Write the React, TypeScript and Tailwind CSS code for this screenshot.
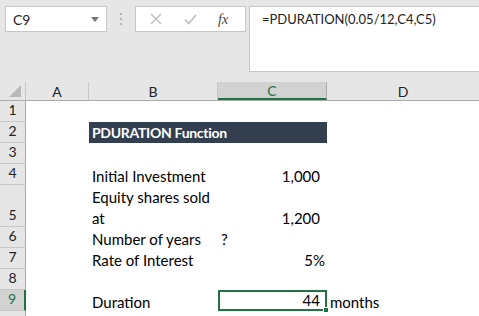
const cellFont = { fontFamily: "Lato, 'Open Sans', sans-serif" };

const rows = [
  { n: "1", h: 21 },
  { n: "2", h: 21 },
  { n: "3", h: 21 },
  { n: "4", h: 21 },
  { n: "5", h: 42 },
  { n: "6", h: 21 },
  { n: "7", h: 21 },
  { n: "8", h: 21 },
  { n: "9", h: 21 },
  { n: "", h: 21 },
];

function RowHeader({ n, h, active }: { n: string; h: number; active?: boolean }) {
  return (
    <div
      className={
        active
          ? "flex items-end justify-center border-b border-r-2 border-b-[#c6c6c6] border-r-[#217346] bg-[#d2d2d2] pb-[1px] text-[14px] text-[#217346]"
          : "flex items-end justify-center border-b border-r border-b-[#c6c6c6] border-r-[#ababab] bg-[#e6e6e6] pb-[1px] text-[14px] text-[#222]"
      }
      style={{ height: h }}
    >
      {n}
    </div>
  );
}

export default function App() {
  return (
    <div
      className="flex h-[316px] w-[479px] flex-col overflow-hidden bg-[#e6e6e6] text-black"
      style={{ fontFamily: "'Segoe UI', Lato, 'Open Sans', sans-serif" }}
    >
      {/* formula bar */}
      <div className="flex h-[82px] shrink-0 items-start pt-[6px]">
        <div className="ml-[5px] flex h-[26px] w-[102px] items-center justify-between border border-[#c6c6c6] bg-white pl-[7px] pr-[7px] text-[14px] text-[#222]">
          <span>C9</span>
          <svg width="8" height="5" viewBox="0 0 8 5">
            <path d="M0 0 L8 0 L4 5 Z" fill="#777" />
          </svg>
        </div>
        <div className="mx-[13px] flex h-[26px] flex-col items-center justify-center gap-[3px]">
          <span className="h-[2px] w-[2px] bg-[#b4b4b4]" />
          <span className="h-[2px] w-[2px] bg-[#b4b4b4]" />
          <span className="h-[2px] w-[2px] bg-[#b4b4b4]" />
        </div>
        <div className="flex h-[26px] w-[111px] items-center border border-[#c6c6c6] bg-white">
          <svg className="ml-[14px]" width="12" height="12" viewBox="0 0 12 12">
            <path d="M1 1 L11 11 M11 1 L1 11" stroke="#bdbdbd" strokeWidth="1.3" />
          </svg>
          <svg className="ml-[22px]" width="13" height="11" viewBox="0 0 13 11">
            <path d="M1 5.5 L4.8 9.5 L12 1" stroke="#bdbdbd" strokeWidth="1.6" fill="none" />
          </svg>
          <span
            className="ml-[21px] text-[14px] italic text-[#444]"
            style={{ fontFamily: "'Liberation Serif', serif" }}
          >
            fx
          </span>
        </div>
        <div
          className="ml-[3px] h-[66px] flex-1 border-y border-l border-[#c6c6c6] bg-white pl-[12px] pt-[3px] text-[13px] text-[#222]"
          style={cellFont}
        >
          =PDURATION(0.05/12,C4,C5)
        </div>
      </div>

      {/* column headers */}
      <div className="flex h-[19px] shrink-0 border-b border-[#ababab] text-[14px] text-[#222]" style={cellFont}>
        <div className="relative w-[26px] border-r border-[#c6c6c6]">
          <svg className="absolute bottom-[3px] right-[4px]" width="12" height="12" viewBox="0 0 12 12">
            <path d="M12 0 L12 12 L0 12 Z" fill="#b8b8b8" />
          </svg>
        </div>
        <div className="flex w-[63px] items-center justify-center border-r border-[#c6c6c6]">A</div>
        <div className="flex w-[129px] items-center justify-center border-r border-[#c6c6c6]">B</div>
        <div className="flex w-[109px] items-center justify-center border-b-2 border-r border-b-[#217346] border-r-[#ababab] bg-[#d2d2d2] text-[#217346]">
          C
        </div>
        <div className="flex flex-1 items-center justify-center">D</div>
      </div>

      {/* sheet */}
      <div className="flex flex-1 bg-white" style={cellFont}>
        <div className="w-[26px] shrink-0">
          {rows.map((r, i) => (
            <RowHeader key={i} n={r.n} h={r.h} active={r.n === "9"} />
          ))}
        </div>
        <div className="grid flex-1 grid-cols-[63px_129px_109px_1fr] grid-rows-[21px_21px_21px_21px_42px_21px_21px_21px_21px_21px] text-[15px] leading-[17px]">
          {/* row 1 */}
          <div className="col-span-4" />
          {/* row 2 */}
          <div />
          <div className="col-span-2 flex items-center bg-[#333f4f] pl-[3px] text-[14px] font-bold tracking-[-0.3px] text-white">
            PDURATION Function
          </div>
          <div />
          {/* row 3 */}
          <div className="col-span-4" />
          {/* row 4 */}
          <div />
          <div className="flex items-end pl-[3px]">Initial Investment</div>
          <div className="flex items-end justify-end pr-[7px]">1,000</div>
          <div />
          {/* row 5 */}
          <div />
          <div className="relative top-[2px] flex items-end pl-[3px] leading-[21px]">
            Equity shares sold
            <br />
            at
          </div>
          <div className="flex items-end justify-end pr-[7px]">1,200</div>
          <div />
          {/* row 6 */}
          <div />
          <div className="flex items-end pl-[3px]">Number of years</div>
          <div className="flex items-end pl-[3px]">?</div>
          <div />
          {/* row 7 */}
          <div />
          <div className="flex items-end pl-[3px]">Rate of Interest</div>
          <div className="flex items-end justify-end pr-[2px]">5%</div>
          <div />
          {/* row 8 */}
          <div className="col-span-4" />
          {/* row 9 */}
          <div />
          <div className="flex items-end pl-[3px]">Duration</div>
          <div className="relative flex items-end justify-end border-2 border-[#217346] pr-[5px]">
            44
            <span className="absolute -bottom-[4px] -right-[4px] h-[6px] w-[6px] border border-white bg-[#217346]" />
          </div>
          <div className="flex items-end pl-[3px]">months</div>
          {/* row 10 */}
          <div className="col-span-4" />
        </div>
      </div>
    </div>
  );
}
